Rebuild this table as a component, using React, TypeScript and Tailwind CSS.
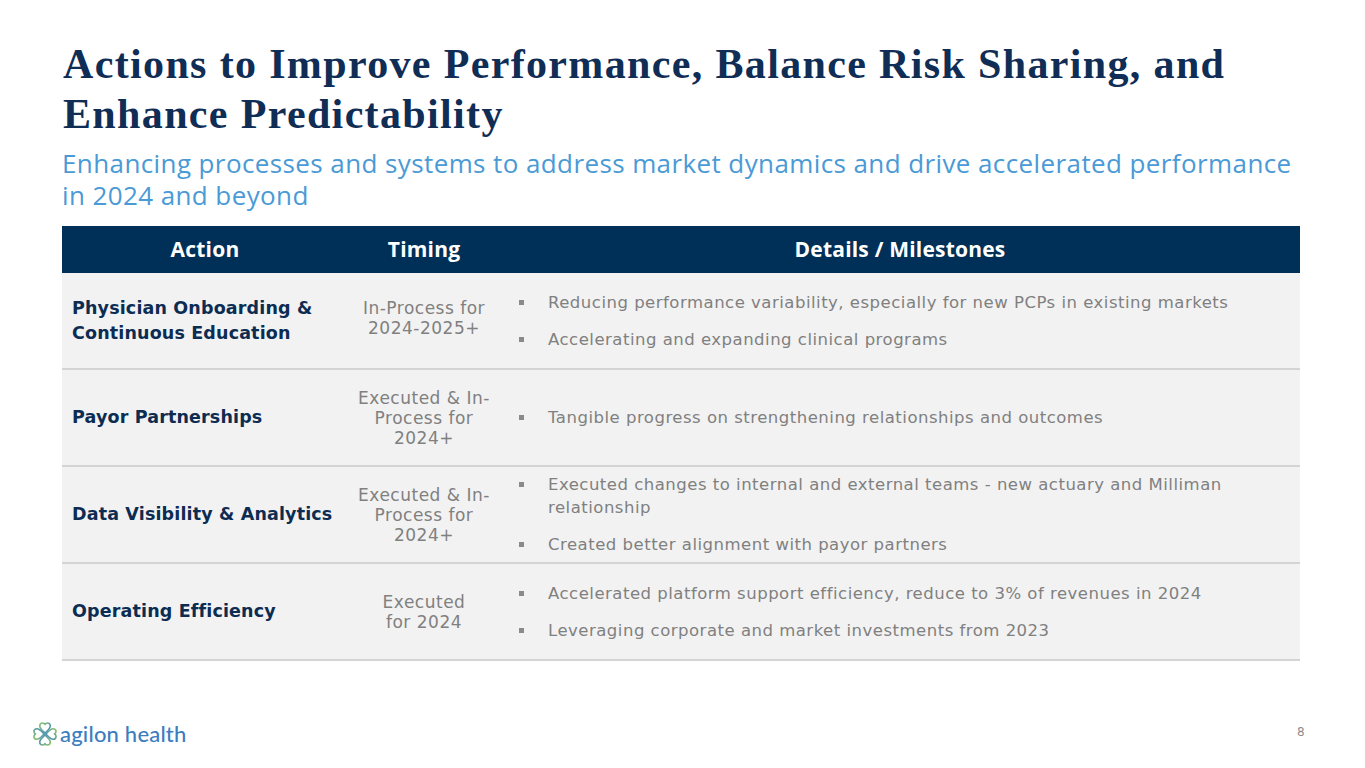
import React from "react";

const rows = [
  {
    action: ["Physician Onboarding &", "Continuous Education"],
    timing: ["In-Process for", "2024-2025+"],
    timingTop: true,
    details: [
      ["Reducing performance variability, especially for new PCPs in existing markets"],
      ["Accelerating and expanding clinical programs"],
    ],
  },
  {
    action: ["Payor Partnerships"],
    timing: ["Executed & In-", "Process for", "2024+"],
    details: [["Tangible progress on strengthening relationships and outcomes"]],
  },
  {
    action: ["Data Visibility & Analytics"],
    timing: ["Executed & In-", "Process for", "2024+"],
    details: [
      ["Executed changes to internal and external teams - new actuary and Milliman", "relationship"],
      ["Created better alignment with payor partners"],
    ],
  },
  {
    action: ["Operating Efficiency"],
    timing: ["Executed", "for 2024"],
    details: [
      ["Accelerated platform support efficiency, reduce to 3% of revenues in 2024"],
      ["Leveraging corporate and market investments from 2023"],
    ],
  },
];

function Logo() {
  const heart = "M0 0 C -3 -3 -7 -6 -7 -9.5 C -7 -12 -5 -13.5 -3.3 -13.5 C -1.8 -13.5 -0.6 -12.6 0 -11.5 C 0.6 -12.6 1.8 -13.5 3.3 -13.5 C 5 -13.5 7 -12 7 -9.5 C 7 -6 3 -3 0 0 Z";
  return (
    <svg width="24" height="24" viewBox="-16 -16 32 32">
      <defs>
        <linearGradient id="lg" x1="0" y1="0" x2="1" y2="1">
          <stop offset="0" stopColor="#8cc56c" />
          <stop offset="1" stopColor="#3f86c6" />
        </linearGradient>
      </defs>
      {[0, 90, 180, 270].map((r) => (
        <path key={r} d={heart} transform={`rotate(${r}) translate(0 -1.2)`} fill="none" stroke="url(#lg)" strokeWidth="2.2" strokeLinejoin="round" />
      ))}
    </svg>
  );
}

export default function App() {
  return (
    <div className="w-[1365px] h-[768px] bg-white relative overflow-hidden">
      <div className="pl-[63px] pt-[39px]">
        <h1
          className="text-[42px] leading-[50px] font-bold text-[#0f2d55] tracking-[1.35px]"
          style={{ fontFamily: '"Liberation Serif", "DejaVu Serif", serif' }}
        >
          Actions to Improve Performance, Balance Risk Sharing, and
          <br />
          Enhance Predictability
        </h1>
        <div
          className="mt-[8px] text-[26px] leading-[32px] text-[#4a9ad6] tracking-[0.4px] -ml-[1px]"
          style={{ fontFamily: '"Open Sans", "Noto Sans", sans-serif' }}
        >
          <div>Enhancing processes and systems to address market dynamics and drive accelerated performance</div>
          <div>in 2024 and beyond</div>
        </div>
      </div>

      <div className="ml-[62px] mt-[15px] w-[1238px]">
        <div
          className="flex h-[47px] items-center bg-[#003057] text-white text-[21px] font-bold tracking-[0.2px]"
          style={{ fontFamily: '"Open Sans", "Noto Sans", sans-serif' }}
        >
          <div className="w-[286px] text-center">Action</div>
          <div className="w-[152px] text-center">Timing</div>
          <div className="flex-1 text-center">Details / Milestones</div>
        </div>
        {rows.map((row, i) => (
          <div
            key={i}
            className="flex h-[97px] bg-[#f2f2f2] border-b-2 border-[#d4d4d4]"
            style={{ fontFamily: '"DejaVu Sans", "Liberation Sans", sans-serif' }}
          >
            <div className="w-[286px] pl-[10px] flex items-center text-[#0d2c52] font-bold text-[17.5px] leading-[25px] tracking-[0.15px]">
              <div>
                {row.action.map((a, j) => (
                  <div key={j}>{a}</div>
                ))}
              </div>
            </div>
            <div
              className={`w-[152px] flex justify-center text-[#808080] text-[17px] leading-[20px] tracking-[0.5px] text-center ${
                row.timingTop ? "items-start pt-[25px]" : "items-center"
              }`}
            >
              <div>
                {row.timing.map((t, j) => (
                  <div key={j}>{t}</div>
                ))}
              </div>
            </div>
            <div className="flex-1 flex flex-col justify-center gap-[14px] pl-[18px] text-[#808080] text-[16.5px] leading-[23px] tracking-[0.5px]">
              {row.details.map((d, j) => (
                <div key={j} className="flex">
                  <div className="w-[30px] flex-none pt-[9px] pl-[1px]">
                    <div className="w-[5px] h-[5px] bg-[#8a8a8a]" />
                  </div>
                  <div>
                    {d.map((l, k) => (
                      <div key={k}>{l}</div>
                    ))}
                  </div>
                </div>
              ))}
            </div>
          </div>
        ))}
      </div>

      <div className="absolute left-[33px] top-[721px] flex items-center gap-[3px]">
        <Logo />
        <span
          className="text-[22px] text-[#3b7dbf] tracking-[0.2px] leading-[26px]"
          style={{ fontFamily: '"Lato", "Noto Sans", sans-serif', fontWeight: 500 }}
        >
          agilon health
        </span>
      </div>
      <div
        className="absolute left-[1297px] top-[723px] text-[12px] text-[#8c8c8c]"
        style={{ fontFamily: '"DejaVu Sans", sans-serif' }}
      >
        8
      </div>
    </div>
  );
}
